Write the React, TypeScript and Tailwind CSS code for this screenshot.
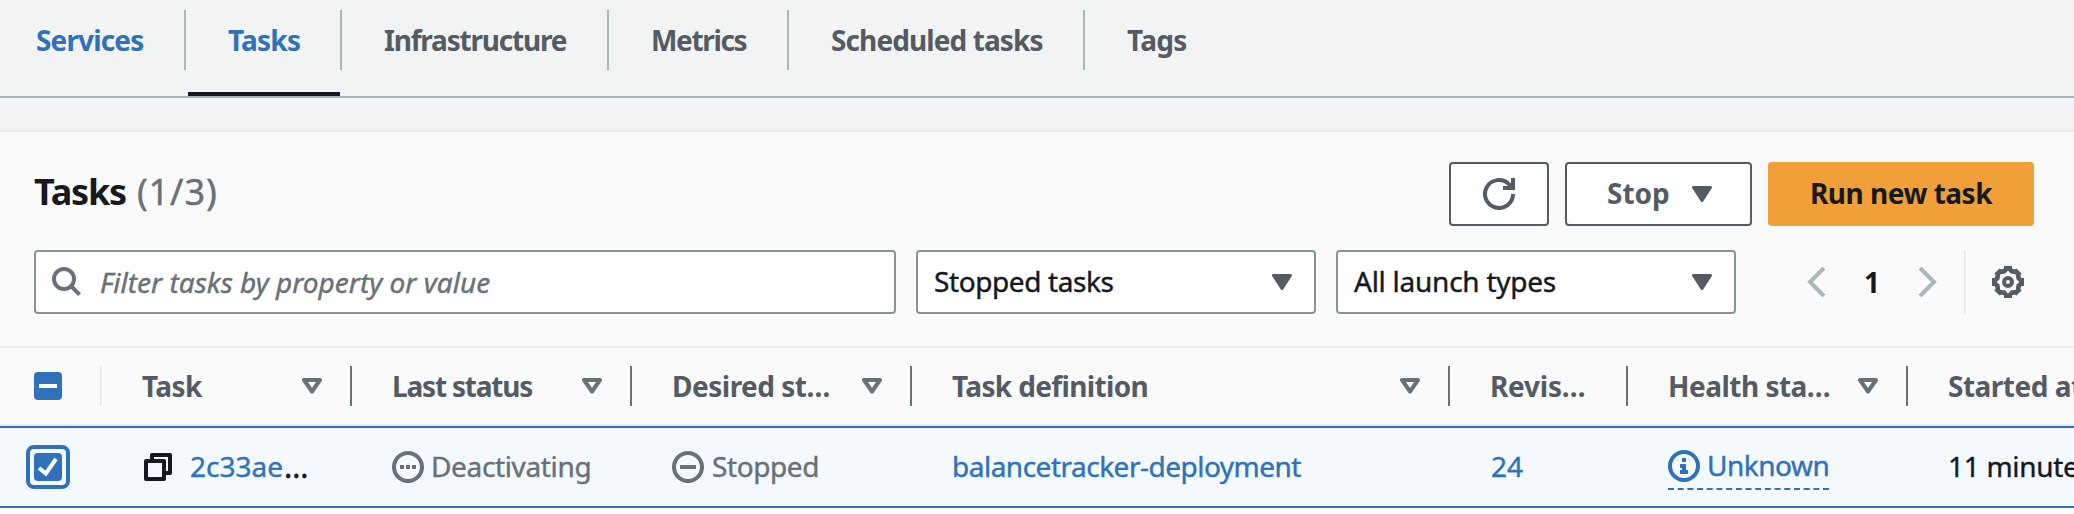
import type { ReactNode } from "react";

const tabs = [
  { label: "Services", box: "w-[186px] pl-[36px] border-r-2", text: "text-[#2f72b9] tracking-[-0.85px]" },
  { label: "Tasks", box: "w-[156px] pl-[42px] border-r-2", text: "text-[#2f72b9] tracking-[-0.8px]", active: true },
  { label: "Infrastructure", box: "w-[267px] pl-[42px] border-r-2", text: "text-[#545b64] tracking-[-1.2px]" },
  { label: "Metrics", box: "w-[180px] pl-[42px] border-r-2", text: "text-[#545b64] tracking-[-1.35px]" },
  { label: "Scheduled tasks", box: "w-[296px] pl-[42px] border-r-2", text: "text-[#545b64] tracking-[-0.9px]" },
  { label: "Tags", box: "w-[160px] pl-[42px]", text: "text-[#545b64] tracking-[-0.7px]" },
];

function Caret({ hollow = false }: { hollow?: boolean }) {
  return hollow ? (
    <svg width="20" height="16" viewBox="0 0 20 16" className="shrink-0">
      <path d="M2 2H18L10 13.5Z" fill="none" stroke="#687078" strokeWidth="4" strokeLinejoin="round" />
    </svg>
  ) : (
    <svg width="20" height="16" viewBox="0 0 20 16" className="shrink-0">
      <path d="M1.5 1.5H18.5L10 14.5Z" fill="#545b64" stroke="#545b64" strokeWidth="3" strokeLinejoin="round" />
    </svg>
  );
}

function Select({ label, text }: { label: string; text: string }) {
  return (
    <div className="flex h-[64px] w-[400px] items-center justify-between rounded-[4px] border-2 border-[#879596] bg-white pr-[22px] pl-[16px]">
      <span className={`pb-[2px] ${text}`}>{label}</span>
      <Caret />
    </div>
  );
}

function HeaderCell({ label, box, text, sort = true }: { label: string; box: string; text: string; sort?: boolean }) {
  return (
    <div className={`flex h-[40px] shrink-0 items-center justify-between ${box}`}>
      <span className={`font-bold text-[#545b64] ${text}`}>{label}</span>
      {sort && <Caret hollow />}
    </div>
  );
}

function Cell({ box, children }: { box: string; children: ReactNode }) {
  return <div className={`flex shrink-0 items-center ${box}`}>{children}</div>;
}

export default function App() {
  return (
    <div className="flex h-[514px] w-full flex-col overflow-hidden bg-[#f2f3f3] font-['Noto_Sans',sans-serif] text-[28px] leading-[36px] whitespace-nowrap text-[#16191f] [-webkit-text-stroke:0.4px] [&_.font-bold]:[-webkit-text-stroke:0px]">
      <nav className="flex h-[98px] shrink-0 border-b-2 border-[#aab7b8] pt-[10px]">
        {tabs.map((t) => (
          <div key={t.label} className={`relative flex h-[60px] items-center border-[#aab7b8] ${t.box}`}>
            <span className={`font-bold ${t.text}`}>{t.label}</span>
            {t.active && <div className="absolute top-[82px] left-[2px] h-[4px] w-[152px] bg-[#16191f]" />}
          </div>
        ))}
      </nav>

      <section className="mt-[32px] flex grow flex-col border-t-2 border-[#eaeded] bg-[#fafafa]">
        <div className="mt-[30px] flex h-[64px] shrink-0 items-center pr-[40px] pl-[34px]">
          <h2 className="flex grow gap-[11px] pb-[5px] text-[36px] leading-[48px]">
            <span className="font-bold tracking-[-1.2px]">Tasks</span>
            <span className="tracking-[0.9px] text-[#687078]">(1/3)</span>
          </h2>
          <div className="flex h-[64px] gap-[16px]">
            <button className="flex w-[100px] items-center justify-center rounded-[4px] border-2 border-[#545b64] bg-white">
              <svg width="32" height="32" viewBox="0 0 32 32" fill="none" stroke="#545b64" strokeWidth="4">
                <path d="M30 16A14 14 0 1 1 25.9 6.1L29 10" />
                <path d="M30 0V10H20" />
              </svg>
            </button>
            <button className="flex w-[187px] items-center rounded-[4px] border-2 border-[#545b64] bg-white pl-[40px]">
              <span className="w-[85px] pb-[2px] text-left font-bold text-[#545b64]">Stop</span>
              <Caret />
            </button>
            <button className="w-[266px] rounded-[4px] bg-[#f19f38] pb-[2px] font-bold tracking-[-0.5px]">Run new task</button>
          </div>
        </div>

        <div className="mt-[24px] flex h-[64px] shrink-0 items-center pl-[34px]">
          <div className="mr-[20px] flex h-[64px] w-[862px] items-center rounded-[4px] border-2 border-[#879596] bg-white pl-[16px]">
            <svg width="30" height="30" viewBox="0 0 30 30" fill="none" stroke="#687078" strokeWidth="4" className="shrink-0">
              <circle cx="12" cy="12" r="10" />
              <path d="M19 19L27.6 27.6" />
            </svg>
            <span className="pl-[18px] text-[#687078] italic">Filter tasks by property or value</span>
          </div>
          <Select label="Stopped tasks" text="tracking-[-0.4px]" />
          <div className="w-[20px]" />
          <Select label="All launch types" text="tracking-[-0.25px]" />
          <div className="ml-[70px] flex h-[64px] w-[160px] items-center border-r-2 border-[#eaeded]">
            <svg width="20" height="32" viewBox="0 0 20 32" fill="none" stroke="#aab7b8" strokeWidth="4">
              <path d="M18 2L4 16L18 30" />
            </svg>
            <span className="w-[92px] text-center font-bold">1</span>
            <svg width="20" height="32" viewBox="0 0 20 32" fill="none" stroke="#aab7b8" strokeWidth="4">
              <path d="M2 2L16 16L2 30" />
            </svg>
          </div>
          <svg width="32" height="32" viewBox="0 0 32 32" className="ml-[26px]">
            <path
              fill="#545b64"
              fillRule="evenodd"
              d="M12 0H20V2.6L22.4 3.6L24.4 2.4L29.6 7.6L28.4 9.6L29.4 12H32V20H29.4L28.4 22.4L29.6 24.4L24.4 29.6L22.4 28.4L20 29.4V32H12V29.4L9.6 28.4L7.6 29.6L2.4 24.4L3.6 22.4L2.6 20H0V12H2.6L3.6 9.6L2.4 7.6L7.6 2.4L9.6 3.6L12 2.6Z M16 4.6L13.2 7.6L8.2 8.2L7.6 13.2L4.6 16L7.6 18.8L8.2 23.8L13.2 24.4L16 27.4L18.8 24.4L23.8 23.8L24.4 18.8L27.4 16L24.4 13.2L23.8 8.2L18.8 7.6Z"
            />
            <circle cx="16" cy="16" r="4" fill="none" stroke="#545b64" strokeWidth="4" />
          </svg>
        </div>

        <div className="mt-[32px] flex h-[80px] shrink-0 items-center border-y-2 border-[#eaeded]">
          <div className="flex h-[40px] w-[102px] shrink-0 items-center border-r-2 border-[#eaeded] pl-[34px]">
            <div className="flex h-[28px] w-[28px] items-center justify-center rounded-[4px] bg-[#2f72b9]">
              <div className="h-[4px] w-[18px] bg-white" />
            </div>
          </div>
          <HeaderCell label="Task" box="w-[250px] border-r-2 border-[#687078] pr-[28px] pl-[40px]" text="tracking-[-0.6px]" />
          <HeaderCell label="Last status" box="w-[280px] border-r-2 border-[#687078] pr-[28px] pl-[40px]" text="tracking-[-1.2px]" />
          <HeaderCell label="Desired st…" box="w-[280px] border-r-2 border-[#687078] pr-[28px] pl-[40px]" text="tracking-[-0.5px]" />
          <HeaderCell label="Task definition" box="w-[538px] border-r-2 border-[#687078] pr-[28px] pl-[40px]" text="tracking-[-0.65px]" />
          <HeaderCell label="Revis…" box="w-[178px] border-r-2 border-[#687078] pl-[40px]" text="tracking-[-0.25px]" sort={false} />
          <HeaderCell label="Health sta…" box="w-[280px] border-r-2 border-[#687078] pr-[28px] pl-[40px]" text="tracking-[-0.5px]" />
          <HeaderCell label="Started at" box="w-[280px] pl-[40px]" text="tracking-[-0.5px]" sort={false} />
        </div>

        <div className="flex h-[82px] shrink-0 border-y-2 border-[#2f72b9] bg-[#f3f9fd]">
          <Cell box="w-[142px] pl-[26px]">
            <div className="flex h-[44px] w-[44px] items-center justify-center rounded-[8px] border-4 border-[#2f72b9]">
              <svg width="28" height="28" viewBox="0 0 28 28">
                <rect width="28" height="28" rx="4" fill="#2f72b9" />
                <path d="M5 15L11.8 20.5L22 6" fill="none" stroke="#fff" strokeWidth="4" />
              </svg>
            </div>
          </Cell>
          <Cell box="w-[250px] pl-[2px]">
            <svg width="28" height="28" viewBox="0 0 28 28" fill="none" stroke="#16191f" strokeWidth="4" strokeLinejoin="round">
              <path d="M8 8V2H26V20H20" />
              <rect x="2" y="8" width="18" height="18" />
            </svg>
            <span className="flex pb-[2px] pl-[18px]">
              <span className="text-[#2f72b9]">2c33ae</span>
              <span className="pl-px text-[31px]">…</span>
            </span>
          </Cell>
          <Cell box="w-[280px]">
            <svg width="32" height="32" viewBox="0 0 32 32" fill="none" stroke="#687078" strokeWidth="4">
              <circle cx="16" cy="16" r="14" />
              <path d="M8 16H24" strokeDasharray="4 2" />
            </svg>
            <span className="pb-[2px] pl-[7px] tracking-[-0.35px] text-[#687078]">Deactivating</span>
          </Cell>
          <Cell box="w-[280px]">
            <svg width="32" height="32" viewBox="0 0 32 32" fill="none" stroke="#687078" strokeWidth="4">
              <circle cx="16" cy="16" r="14" />
              <path d="M8 16H24" />
            </svg>
            <span className="pb-[2px] pl-[8px] tracking-[-0.4px] text-[#687078]">Stopped</span>
          </Cell>
          <Cell box="w-[539px]">
            <span className="pb-[2px] tracking-[-0.5px] text-[#2f72b9]">balancetracker-deployment</span>
          </Cell>
          <Cell box="w-[177px]">
            <span className="pb-[2px] text-[#2f72b9]">24</span>
          </Cell>
          <Cell box="w-[280px]">
            <div className="mt-[8px] flex h-[46px] flex-col">
              <div className="flex h-[36px] items-center">
                <svg width="32" height="32" viewBox="0 0 32 32" fill="none" stroke="#2f72b9" strokeWidth="4">
                  <circle cx="16" cy="16" r="14" />
                  <path d="M14 10H18M12 16H16V24M12 22H20" />
                </svg>
                <span className="pb-[3px] pl-[7px] tracking-[-0.5px] text-[#2f72b9]">Unknown</span>
              </div>
              <svg width="161" height="2" viewBox="0 0 161 2" className="mt-[4px]">
                <path d="M0 1H161" stroke="#2f72b9" strokeWidth="2" strokeDasharray="6 3.69" />
              </svg>
            </div>
          </Cell>
          <Cell box="w-[200px]">
            <span className="pb-[2px] tracking-[-0.3px]">11 minutes ago</span>
          </Cell>
        </div>
        <div className="grow bg-white" />
      </section>
    </div>
  );
}
